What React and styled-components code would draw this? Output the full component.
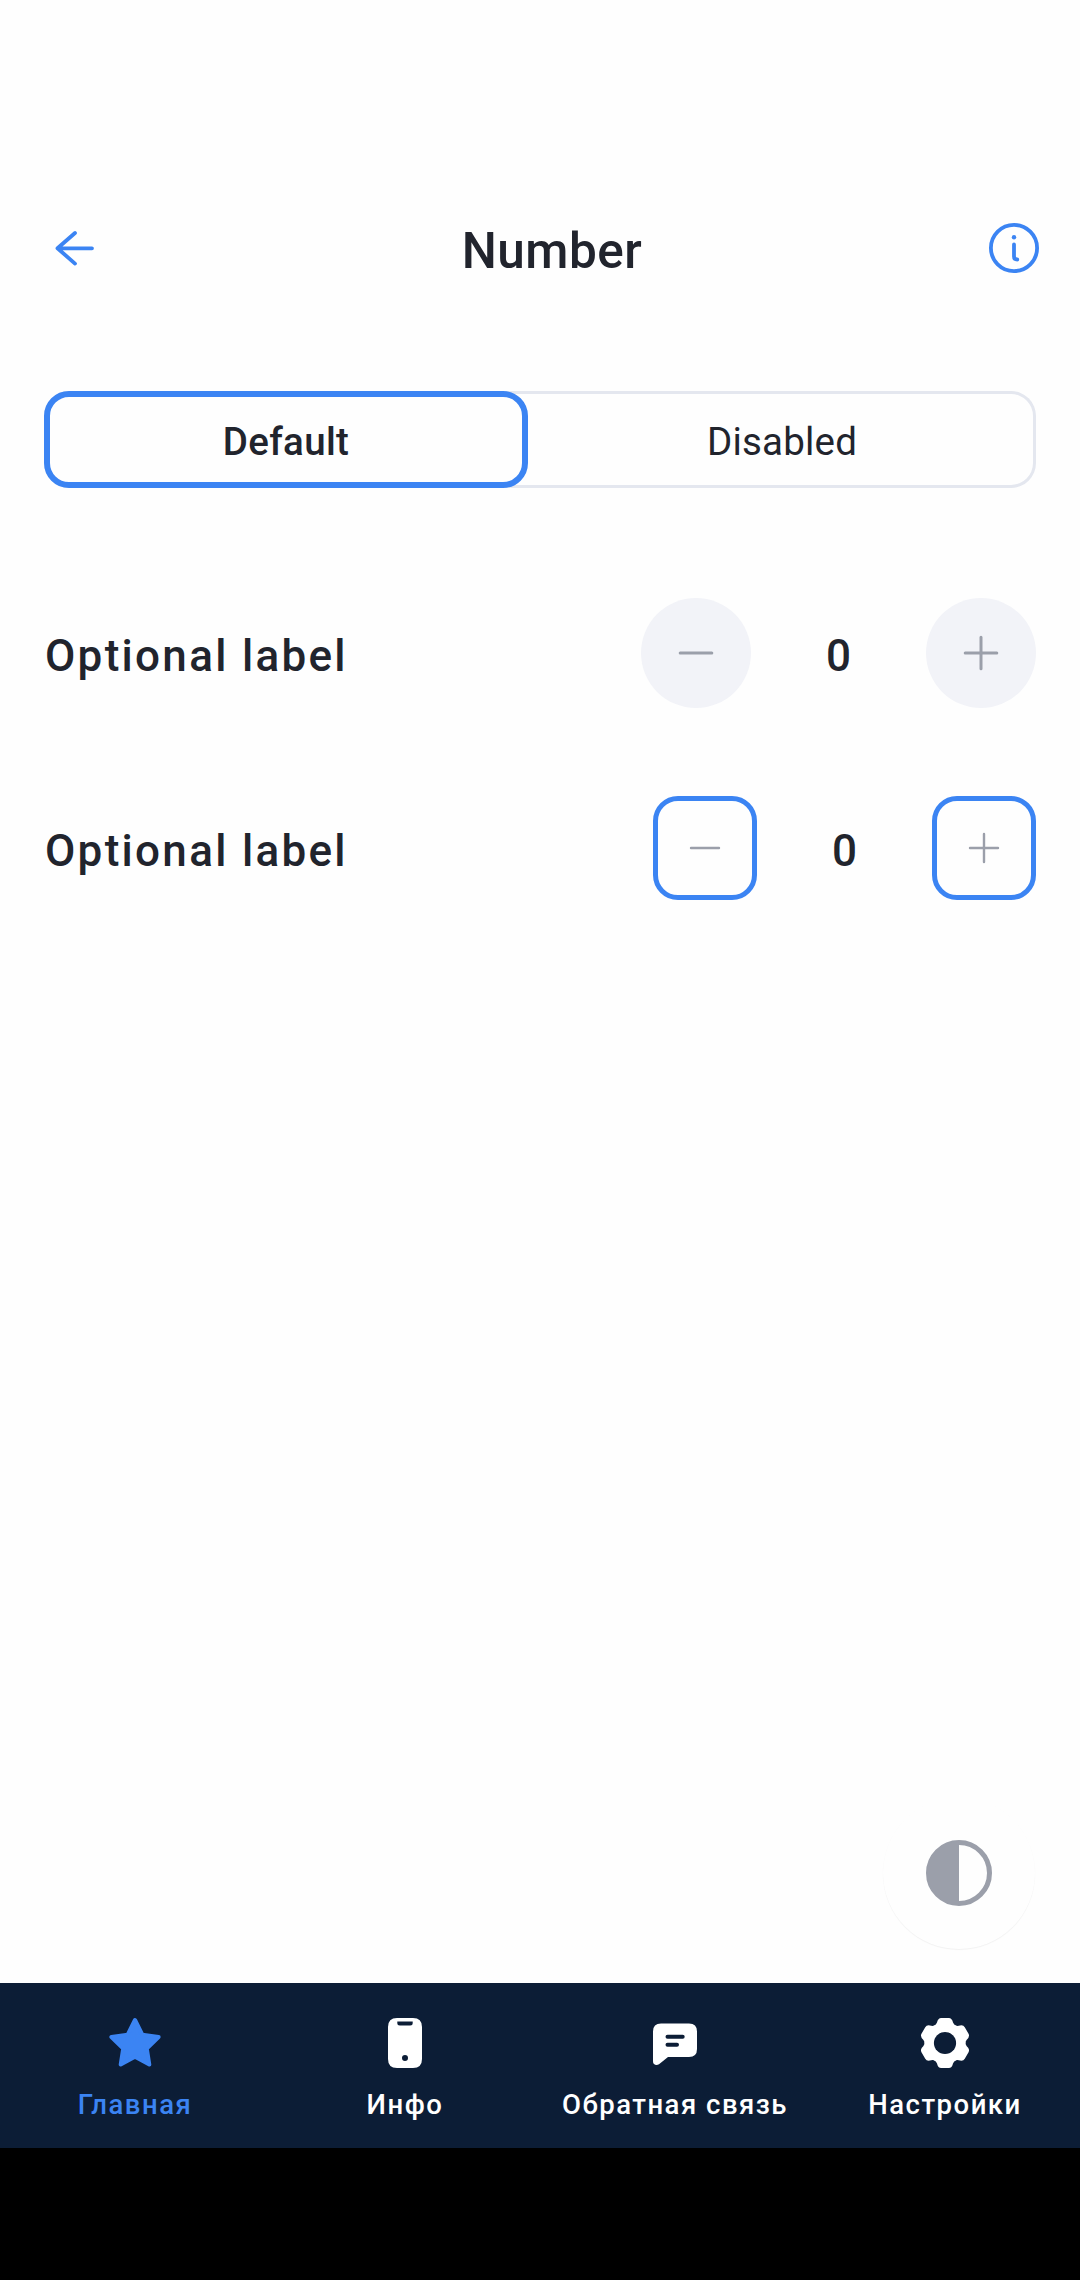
import React from "react";
import styled, { createGlobalStyle } from "styled-components";

const BLUE = "#3b84f3";
const INK = "#21242d";
const GREY = "#9b9faa";

const Global = createGlobalStyle`
  *, *::before, *::after { box-sizing: border-box; }
  body { margin: 0; background: #fefefe; font-family: Roboto, sans-serif; color: ${INK}; }
  button { font: inherit; color: inherit; background: none; border: 0; padding: 0; margin: 0; letter-spacing: inherit; }
  svg { display: block; }
`;

const Screen = styled.div`
  display: flex;
  flex-direction: column;
  width: 1080px;
  height: 2280px;
  overflow: hidden;
  background: #fefefe;
`;

const Header = styled.header`
  display: grid;
  grid-template-columns: 66px 1fr 66px;
  align-items: center;
  margin-top: 193px;
  padding: 0 33px 0 41px;
  height: 110px;
`;

const IconButton = styled.button`
  width: 66px;
  height: 66px;
`;

const Title = styled.h1`
  margin: 0;
  padding: 5px 0 0 16px;
  text-align: center;
  font-size: 49.5px;
  line-height: 60px;
  font-weight: 500;
  letter-spacing: 0.5px;
`;

const Content = styled.main`
  display: flex;
  flex-direction: column;
  flex: 1;
  padding: 88px 44px 0;
`;

const Segments = styled.div`
  display: flex;
  height: 97px;
  border-radius: 25px;
  box-shadow: inset 0 0 0 3px #e4e7ef;
`;

const Segment = styled.button`
  width: ${(p) => (p.$active ? "484px" : "508px")};
  height: 97px;
  padding-top: 3px;
  border: ${(p) => (p.$active ? `6px solid ${BLUE}` : "6px solid transparent")};
  border-radius: 25px;
  background: ${(p) => (p.$active ? "#fefefe" : "transparent")};
  font-size: 38.5px;
  font-weight: ${(p) => (p.$active ? 500 : 400)};
  letter-spacing: ${(p) => (p.$active ? "0.35px" : "0.2px")};
`;

const Row = styled.div`
  display: flex;
  align-items: center;
  justify-content: space-between;
  height: 110px;
  margin-top: ${(p) => p.$top}px;
`;

const Label = styled.span`
  padding: 5px 0 0 1px;
  font-size: 44px;
  line-height: 52px;
  font-weight: 500;
  letter-spacing: 2.3px;
`;

const Stepper = styled.div`
  display: flex;
  align-items: center;
`;

const StepButton = styled.button`
  display: flex;
  align-items: center;
  justify-content: center;
  width: ${(p) => (p.$outlined ? 104 : 110)}px;
  height: ${(p) => (p.$outlined ? 104 : 110)}px;
  border: ${(p) => (p.$outlined ? `5px solid ${BLUE}` : "0")};
  border-radius: ${(p) => (p.$outlined ? "25px" : "50%")};
  background: ${(p) => (p.$outlined ? "transparent" : "#f2f3f8")};
`;

const Value = styled.span`
  width: 175px;
  padding-top: 5px;
  text-align: center;
  font-size: 44px;
  line-height: 52px;
  font-weight: 500;
`;

const FabArea = styled.div`
  display: flex;
  justify-content: flex-end;
  margin-top: auto;
  padding: 0 1px 34px 0;
`;

const Fab = styled.button`
  display: flex;
  align-items: center;
  justify-content: center;
  width: 152px;
  height: 152px;
  border-radius: 50%;
  background: #fefefe;
  box-shadow: 0 1px 1px rgba(0, 0, 0, 0.05);
`;

const NavBar = styled.nav`
  display: grid;
  grid-template-columns: repeat(4, 1fr);
  height: 165px;
  background: #0c1d36;
`;

const NavItem = styled.button`
  display: flex;
  flex-direction: column;
  align-items: center;
  justify-content: flex-start;
  padding-top: 27px;
  color: ${(p) => (p.$active ? BLUE : "#ffffff")};
`;

const NavLabel = styled.span`
  margin-top: 13px;
  font-size: 27.5px;
  line-height: 32px;
  font-weight: 500;
  letter-spacing: 1.5px;
  white-space: nowrap;
`;

const SystemBar = styled.div`
  height: 132px;
  background: #000;
`;

const BackIcon = () => (
  <svg width="66" height="66" viewBox="0 0 66 66" fill="none" stroke={BLUE} strokeWidth="3.8" strokeLinecap="round" strokeLinejoin="round">
    <path d="M51 33.3H16.5M34 18 16.5 33.3 34 48.6" />
  </svg>
);

const InfoIcon = () => (
  <svg width="66" height="66" viewBox="0 0 66 66" fill="none" stroke={BLUE} strokeWidth="3.8" strokeLinecap="round">
    <circle cx="33" cy="33" r="23.1" />
    <path d="M33 29.5V41.5Q33 44.5 36.3 44.5" />
    <circle cx="33" cy="22.2" r="2.2" fill={BLUE} stroke="none" />
  </svg>
);

const StepIcon = ({ plus, size, weight }) => (
  <svg width="40" height="40" viewBox="-20 -20 40 40" stroke={GREY} strokeWidth={weight} strokeLinecap="round">
    <path d={`M${-size} 0H${size}${plus ? `M0 ${-size}V${size}` : ""}`} />
  </svg>
);

const ContrastIcon = () => (
  <svg width="66" height="66" viewBox="0 0 66 66">
    <circle cx="33" cy="33" r="30.5" fill="none" stroke={GREY} strokeWidth="5" />
    <path d="M33 1A32 32 0 0 0 33 65Z" fill={GREY} />
  </svg>
);

const StarIcon = () => (
  <svg width="66" height="66" viewBox="0 0 66 66" fill="currentColor" stroke="currentColor" strokeWidth="4" strokeLinejoin="round">
    <path d="M33 10 40.3 24.7 56.6 27 44.8 38.5 47.3 54.5 33 46.8 18.7 54.5 21.2 38.5 9.4 27 25.7 24.7Z" />
  </svg>
);

const PhoneIcon = () => (
  <svg width="66" height="66" viewBox="0 0 66 66" fill="currentColor">
    <path
      fillRule="evenodd"
      d="M25 8H41Q50 8 50 17V49Q50 58 41 58H25Q16 58 16 49V17Q16 8 25 8ZM25.3 11.5V13Q25.3 15.5 27.8 15.5H38.2Q40.7 15.5 40.7 13V11.5ZM33 45A3 3 0 1 0 33 51A3 3 0 1 0 33 45Z"
    />
  </svg>
);

const ChatIcon = () => (
  <svg width="66" height="66" viewBox="0 0 66 66" fill="none">
    <path fill="currentColor" d="M19 13.5H47Q55 13.5 55 21.5V39Q55 47 47 47H26L17 54.3Q14 56 11.7 53.7Q11 53 11 51V21.5Q11 13.5 19 13.5Z" />
    <path d="M25.5 26.7H40.7M25.5 34.8H35" stroke="#0c1d36" strokeWidth="4" strokeLinecap="round" />
  </svg>
);

const TOOTH_ANGLES = [0, 60, 120, 180, 240, 300];

const GearIcon = () => (
  <svg width="66" height="66" viewBox="-33 -33 66 66">
    <circle r="20" fill="currentColor" />
    {TOOTH_ANGLES.map((a) => (
      <path key={a} transform={`rotate(${a})`} fill="currentColor" d="M-11.5 -17Q-9 -17.8 -8 -20.5Q-7 -25 -3.8 -25H3.8Q7 -25 8 -20.5Q9 -17.8 11.5 -17L0 0Z" />
    ))}
    <circle r="11.1" fill="#0c1d36" />
  </svg>
);

const NAV = [
  { label: "Главная", Icon: StarIcon, active: true },
  { label: "Инфо", Icon: PhoneIcon },
  { label: "Обратная связь", Icon: ChatIcon },
  { label: "Настройки", Icon: GearIcon },
];

const NumberField = ({ outlined, top }) => {
  const icon = outlined ? { size: 14, weight: 2.4 } : { size: 15.8, weight: 3 };
  return (
    <Row $top={top}>
      <Label>Optional label</Label>
      <Stepper>
        <StepButton $outlined={outlined}>
          <StepIcon {...icon} />
        </StepButton>
        <Value>0</Value>
        <StepButton $outlined={outlined}>
          <StepIcon plus {...icon} />
        </StepButton>
      </Stepper>
    </Row>
  );
};

export default function App() {
  return (
    <Screen>
      <Global />
      <Header>
        <IconButton><BackIcon /></IconButton>
        <Title>Number</Title>
        <IconButton><InfoIcon /></IconButton>
      </Header>
      <Content>
        <Segments>
          <Segment $active>Default</Segment>
          <Segment>Disabled</Segment>
        </Segments>
        <NumberField top={110} />
        <NumberField outlined top={85} />
        <FabArea>
          <Fab><ContrastIcon /></Fab>
        </FabArea>
      </Content>
      <NavBar>
        {NAV.map(({ label, Icon, active }) => (
          <NavItem key={label} $active={active}>
            <Icon />
            <NavLabel>{label}</NavLabel>
          </NavItem>
        ))}
      </NavBar>
      <SystemBar />
    </Screen>
  );
}
